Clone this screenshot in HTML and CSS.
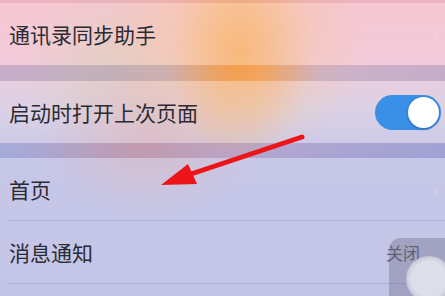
FILE: index.html
```html
<!DOCTYPE html>
<html lang="zh">
<head>
<meta charset="utf-8">
<link rel="stylesheet" href="styles.css">
</head>
<body>
<div class="screen">
  <div class="sep sep-top"></div>
  <div class="row">
    <span class="label">通讯录同步助手</span>
    <span class="chev">›</span>
  </div>
  <div class="sep sep-1"></div>
  <div class="row">
    <span class="label">启动时打开上次页面</span>
    <span class="toggle"><span class="knob"></span></span>
  </div>
  <div class="sep sep-2"></div>
  <div class="row">
    <span class="label">首页</span>
    <span class="chev">›</span>
  </div>
  <div class="divider"></div>
  <div class="row">
    <span class="label">消息通知</span>
    <span class="value">关闭</span>
  </div>
  <div class="divider"></div>
  <div class="row"></div>

  <svg class="arrow" width="445" height="296" viewBox="0 0 445 296">
    <line x1="302" y1="137" x2="188" y2="175" stroke="#ec1418" stroke-width="5" stroke-linecap="round"/>
    <polygon points="161,185 188,164 197,184" fill="#ec1418"/>
  </svg>
  <div class="assist"><span class="assist-dot"></span></div>
</div>
</body>
</html>
```
FILE: styles.css
```css
html, body {
  margin: 0;
  padding: 0;
}
body {
  width: 445px;
  height: 296px;
  overflow: hidden;
  font-family: "Noto Sans CJK SC", "Noto Sans", sans-serif;
}
.screen {
  position: relative;
  width: 445px;
  height: 296px;
  overflow: hidden;
  display: flex;
  flex-direction: column;
  background:
    radial-gradient(ellipse 70px 110px at 240px 55px, rgba(250,175,100,0.75), rgba(250,175,100,0) 100%),
    radial-gradient(ellipse 130px 120px at 235px 40px, rgba(246,195,140,0.8), rgba(246,195,140,0) 100%),
    radial-gradient(ellipse 110px 80px at 150px 135px, rgba(225,175,175,0.6), rgba(225,175,175,0) 100%),
    radial-gradient(ellipse 90px 80px at 110px 60px, rgba(215,205,175,0.55), rgba(215,205,175,0) 100%),
    linear-gradient(180deg, #f6c3d0 0px, #f3c6d6 55px, #d8cee4 110px, #c3c3e6 160px, #bec1e6 296px);
}
.sep {
  flex: none;
  background: rgba(70, 70, 130, 0.22);
}
.sep-top { height: 3px; background: rgba(200, 110, 110, 0.18); }
.sep-1 {
  height: 16px;
  background: linear-gradient(90deg, rgba(90,90,140,0.25) 0%, rgba(90,90,140,0.2) 38%, rgba(240,130,30,0.45) 52%, rgba(240,130,30,0.4) 58%, rgba(90,90,140,0.2) 72%, rgba(90,90,140,0.25) 100%);
}
.sep-2 {
  height: 15px;
  background: linear-gradient(90deg, rgba(60,90,180,0.25) 0%, rgba(150,80,110,0.3) 30%, rgba(130,80,140,0.25) 50%, rgba(60,70,170,0.28) 100%);
}
.row {
  flex: none;
  height: 62px;
  display: flex;
  align-items: center;
  justify-content: space-between;
  padding: 0 4px 0 9px;
  background: rgba(255,255,255,0.08);
}
.label {
  font-size: 21px;
  color: #2b2b33;
}
.chev {
  font-size: 22px;
  color: rgba(255,255,255,0.22);
  padding-right: 2px;
}
.value {
  font-size: 17px;
  color: #55555f;
  padding-right: 21px;
}
.divider {
  flex: none;
  height: 1px;
  margin-left: 8px;
  background: rgba(120,120,170,0.25);
}
.toggle {
  width: 66px;
  height: 35px;
  border-radius: 18px;
  background: #3a8fe6;
  display: flex;
  align-items: center;
  justify-content: flex-end;
  padding-right: 2px;
  box-sizing: border-box;
}
.knob {
  width: 31px;
  height: 31px;
  border-radius: 50%;
  background: #fff;
  box-shadow: 0 1px 3px rgba(40,60,120,0.5);
}
.arrow {
  position: absolute;
  left: 0;
  top: 0;
}
.assist {
  position: absolute;
  left: 389px;
  top: 238px;
  width: 72px;
  height: 72px;
  border-radius: 12px;
  background: rgba(115,115,140,0.42);
  display: flex;
  align-items: flex-start;
  justify-content: flex-start;
}
.assist-dot {
  margin: 18px 0 0 17px;
  width: 46px;
  height: 46px;
  border-radius: 50%;
  background: radial-gradient(circle, rgba(222,222,234,1) 55%, rgba(205,205,220,0.85) 70%, rgba(170,170,190,0.25) 100%);
}
```
